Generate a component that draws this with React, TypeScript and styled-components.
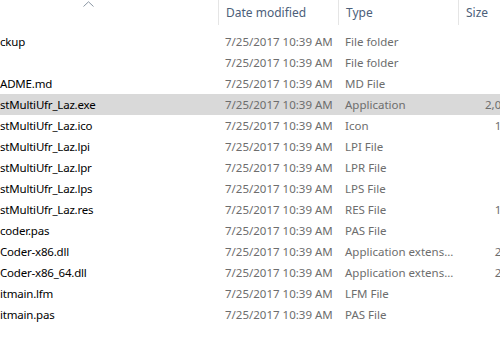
import React from "react";
import styled, { createGlobalStyle } from "styled-components";

const GlobalStyle = createGlobalStyle`
  html, body {
    margin: 0;
    padding: 0;
    background: #ffffff;
    overflow: hidden;
  }
  body {
    font-family: "Noto Sans", "Open Sans", sans-serif;
    font-size: 11.5px;
  }
`;

const Page = styled.div`
  width: 500px;
  height: 343px;
  overflow: hidden;
  background: #fff;
`;

const Grid = `
  display: grid;
  grid-template-columns: 218px 120px 120px 80px;
`;

const Header = styled.div`
  ${Grid}
  height: 25px;
  margin-bottom: 6px;
  font-size: 12px;
`;

const HeadCell = styled.div<{ $divider?: boolean }>`
  display: flex;
  align-items: center;
  padding-left: 7px;
  color: #4c607a;
  border-left: ${(p) => (p.$divider ? "1px solid #e5e5e5" : "none")};
  white-space: nowrap;
`;

const SortCell = styled.div`
  display: flex;
  justify-content: center;
  align-items: flex-start;
  padding-right: 42px;
  padding-top: 1px;
`;

const Row = styled.div<{ $selected?: boolean }>`
  ${Grid}
  height: 21px;
  align-items: center;
  background: ${(p) => (p.$selected ? "#d9d9d9" : "transparent")};
  white-space: nowrap;
`;

const NameCell = styled.div`
  color: #000;
  overflow: hidden;
  letter-spacing: -0.2px;
`;

const InfoCell = styled.div`
  color: #6d6d6d;
  padding-left: 7px;
  overflow: hidden;
  text-overflow: ellipsis;
`;

const SizeCell = styled.div`
  color: #6d6d6d;
  text-align: right;
  padding-right: 6px;
`;

const files = [
  { name: "ckup", type: "File folder", size: "" },
  { name: "", type: "File folder", size: "" },
  { name: "ADME.md", type: "MD File", size: "" },
  { name: "stMultiUfr_Laz.exe", type: "Application", size: "2,017 KB", selected: true },
  { name: "stMultiUfr_Laz.ico", type: "Icon", size: "138 KB" },
  { name: "stMultiUfr_Laz.lpi", type: "LPI File", size: "" },
  { name: "stMultiUfr_Laz.lpr", type: "LPR File", size: "" },
  { name: "stMultiUfr_Laz.lps", type: "LPS File", size: "" },
  { name: "stMultiUfr_Laz.res", type: "RES File", size: "139 KB" },
  { name: "coder.pas", type: "PAS File", size: "" },
  { name: "Coder-x86.dll", type: "Application extens...", size: "254 KB" },
  { name: "Coder-x86_64.dll", type: "Application extens...", size: "286 KB" },
  { name: "itmain.lfm", type: "LFM File", size: "" },
  { name: "itmain.pas", type: "PAS File", size: "" },
];

const Chevron = () => (
  <svg width="11" height="6" viewBox="0 0 11 6">
    <path d="M0.5 5.5 L5.5 0.8 L10.5 5.5" fill="none" stroke="#8a96a3" strokeWidth="1" />
  </svg>
);

export default function App() {
  return (
    <Page>
      <GlobalStyle />
      <Header>
        <SortCell>
          <Chevron />
        </SortCell>
        <HeadCell $divider>Date modified</HeadCell>
        <HeadCell $divider>Type</HeadCell>
        <HeadCell $divider>Size</HeadCell>
      </Header>
      {files.map((f, i) => (
        <Row key={i} $selected={f.selected}>
          <NameCell>{f.name}</NameCell>
          <InfoCell>7/25/2017 10:39 AM</InfoCell>
          <InfoCell>{f.type}</InfoCell>
          <SizeCell>{f.size}</SizeCell>
        </Row>
      ))}
    </Page>
  );
}
